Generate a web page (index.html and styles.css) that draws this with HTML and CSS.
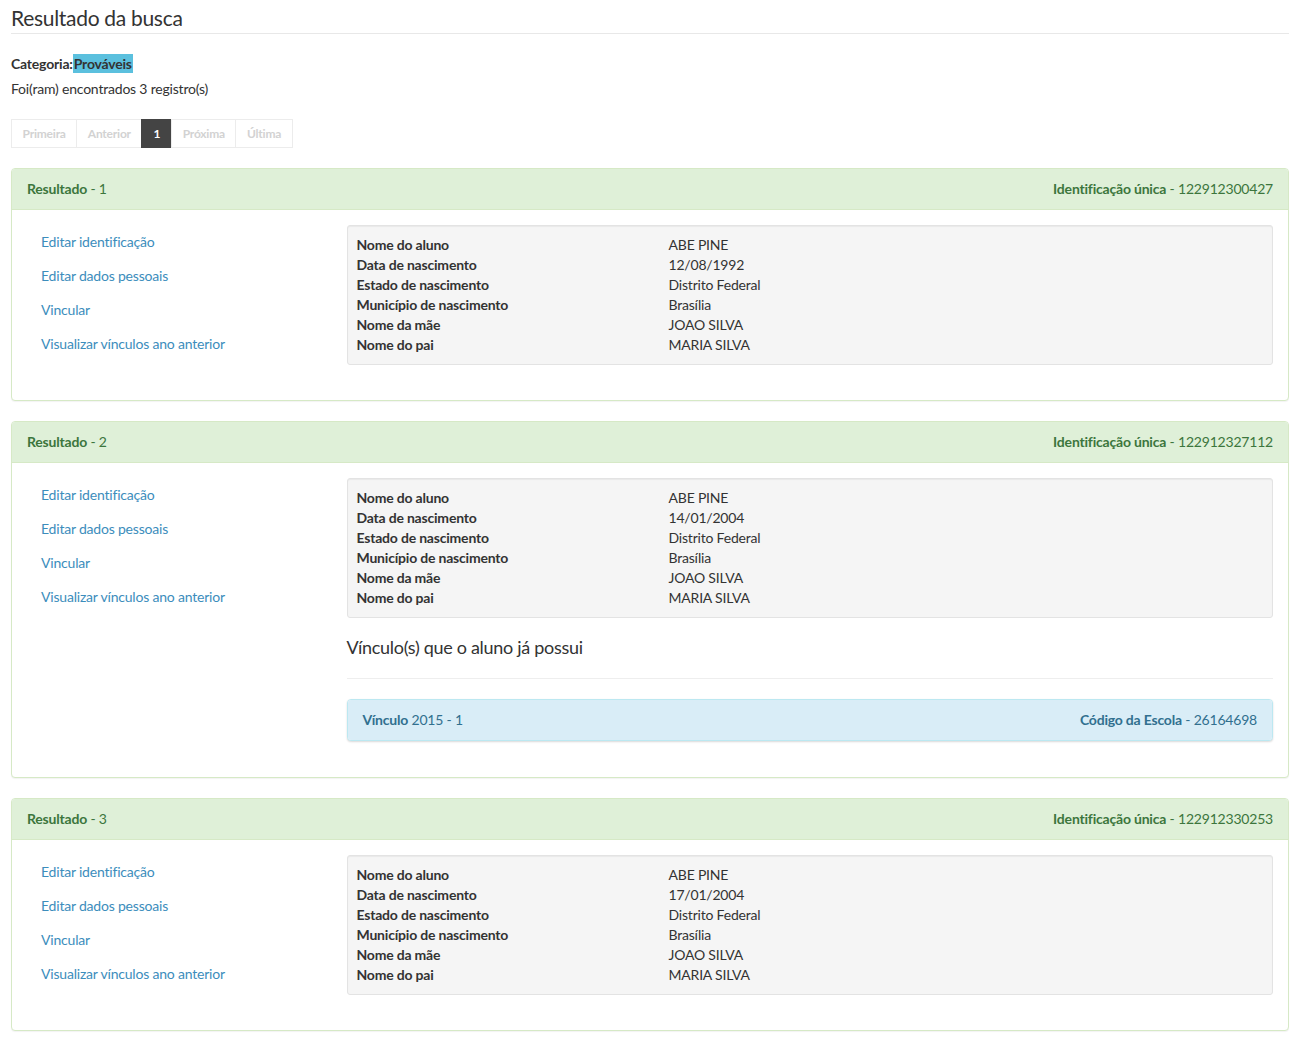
FILE: index.html
```html
<!DOCTYPE html>
<html lang="pt-BR">
<head>
<meta charset="utf-8">
<title>Resultado da busca</title>
<link rel="stylesheet" href="styles.css">
</head>
<body>
<div class="page">
  <h2 class="page-header">Resultado da busca</h2>
  <p class="category"><strong>Categoria:</strong><span class="label-info">Prováveis</span></p>
  <p class="count">Foi(ram) encontrados 3 registro(s)</p>
  <ul class="pagination">
    <li class="disabled"><span>Primeira</span></li>
    <li class="disabled"><span>Anterior</span></li>
    <li class="active"><span>1</span></li>
    <li class="disabled"><span>Próxima</span></li>
    <li class="disabled"><span>Última</span></li>
  </ul>

  <div class="panel panel-success">
    <div class="panel-heading"><span><b>Resultado</b> - 1</span><span><b>Identificação única</b> - 122912300427</span></div>
    <div class="panel-body">
      <ul class="actions">
        <li><a href="#">Editar identificação</a></li>
        <li><a href="#">Editar dados pessoais</a></li>
        <li><a href="#">Vincular</a></li>
        <li><a href="#">Visualizar vínculos ano anterior</a></li>
      </ul>
      <div class="main">
        <dl class="well">
          <dt>Nome do aluno</dt><dd>ABE PINE</dd>
          <dt>Data de nascimento</dt><dd>12/08/1992</dd>
          <dt>Estado de nascimento</dt><dd>Distrito Federal</dd>
          <dt>Município de nascimento</dt><dd>Brasília</dd>
          <dt>Nome da mãe</dt><dd>JOAO SILVA</dd>
          <dt>Nome do pai</dt><dd>MARIA SILVA</dd>
        </dl>
      </div>
    </div>
  </div>

  <div class="panel panel-success">
    <div class="panel-heading"><span><b>Resultado</b> - 2</span><span><b>Identificação única</b> - 122912327112</span></div>
    <div class="panel-body">
      <ul class="actions">
        <li><a href="#">Editar identificação</a></li>
        <li><a href="#">Editar dados pessoais</a></li>
        <li><a href="#">Vincular</a></li>
        <li><a href="#">Visualizar vínculos ano anterior</a></li>
      </ul>
      <div class="main">
        <dl class="well">
          <dt>Nome do aluno</dt><dd>ABE PINE</dd>
          <dt>Data de nascimento</dt><dd>14/01/2004</dd>
          <dt>Estado de nascimento</dt><dd>Distrito Federal</dd>
          <dt>Município de nascimento</dt><dd>Brasília</dd>
          <dt>Nome da mãe</dt><dd>JOAO SILVA</dd>
          <dt>Nome do pai</dt><dd>MARIA SILVA</dd>
        </dl>
        <h4 class="section-title">Vínculo(s) que o aluno já possui</h4>
        <div class="panel panel-info">
          <div class="panel-heading"><span><b>Vínculo</b> 2015 - 1</span><span><b>Código da Escola</b> - 26164698</span></div>
        </div>
      </div>
    </div>
  </div>

  <div class="panel panel-success">
    <div class="panel-heading"><span><b>Resultado</b> - 3</span><span><b>Identificação única</b> - 122912330253</span></div>
    <div class="panel-body">
      <ul class="actions">
        <li><a href="#">Editar identificação</a></li>
        <li><a href="#">Editar dados pessoais</a></li>
        <li><a href="#">Vincular</a></li>
        <li><a href="#">Visualizar vínculos ano anterior</a></li>
      </ul>
      <div class="main">
        <dl class="well">
          <dt>Nome do aluno</dt><dd>ABE PINE</dd>
          <dt>Data de nascimento</dt><dd>17/01/2004</dd>
          <dt>Estado de nascimento</dt><dd>Distrito Federal</dd>
          <dt>Município de nascimento</dt><dd>Brasília</dd>
          <dt>Nome da mãe</dt><dd>JOAO SILVA</dd>
          <dt>Nome do pai</dt><dd>MARIA SILVA</dd>
        </dl>
      </div>
    </div>
  </div>
</div>
</body>
</html>
```

FILE: styles.css
```css
* { box-sizing: border-box; }
html, body { margin: 0; padding: 0; background: #fff; }
body {
  font-family: Lato, "Open Sans", "Liberation Sans", sans-serif;
  font-size: 14px;
  line-height: 20px;
  letter-spacing: -0.2px;
  color: #333;
}
.page { padding: 6px 10px 0 11px; }
.page-header {
  margin: 0 0 20px;
  font-size: 21px;
  font-weight: 400;
  line-height: 24px;
  letter-spacing: -0.3px;
  color: #333;
  padding-bottom: 3px;
  border-bottom: 1px solid #e8e8e8;
}
.category { margin: 0 0 5px; }
.category strong { font-weight: 700; }
.label-info { background: #5bc0de; font-weight: 700; color: #333; padding: 0 1px; display: inline-block; line-height: 19px; }
.count { margin: 0 0 20px; }
.pagination { list-style: none; margin: 0 0 20px; padding: 0; display: flex; }
.pagination li span {
  display: block;
  font-size: 12px;
  font-weight: 700;
  line-height: 17px;
  padding: 5px 10.5px;
  border: 1px solid #ececec;
  margin-left: -1px;
  color: #d2d2d2;
  background: #fff;
}
.pagination li:first-child span { margin-left: 0; }
.pagination li.active span { background: #444; border-color: #444; color: #fff; padding: 5px 11px; }

.panel {
  border: 1px solid #d6e9c6;
  border-radius: 4px;
  margin-bottom: 20px;
  background: #fff;
  box-shadow: 0 1px 1px rgba(0,0,0,.05);
}
.panel-heading {
  display: flex;
  justify-content: space-between;
  padding: 10px 15px;
  border-bottom: 1px solid #d6e9c6;
  border-radius: 3px 3px 0 0;
  background: #dff0d8;
  color: #3c763d;
}
.panel-heading b { font-weight: 700; }
.panel-body { display: flex; padding: 15px 0; }
.actions { list-style: none; margin: 0; padding: 0 0 0 15px; width: 319.5px; flex: none; }
.actions li a { display: block; padding: 7px 14px; color: #3c8dbc; text-decoration: none; }
.main { flex: 1; padding: 0 15px 0 15px; min-width: 0; }
.well {
  margin: 0 0 20px;
  padding: 9px;
  background: #f5f5f5;
  border: 1px solid #e3e3e3;
  border-radius: 3px;
  box-shadow: inset 0 1px 1px rgba(0,0,0,.05);
  display: grid;
  grid-template-columns: 312px 1fr;
}
.well dt { font-weight: 700; margin: 0; }
.well dd { margin: 0; }
.section-title {
  margin: 0 0 20px;
  font-size: 18px;
  font-weight: 400;
  line-height: 18px;
  letter-spacing: -0.3px;
  padding-bottom: 22px;
  border-bottom: 1px solid #eee;
}
.panel-info { border-color: #bce8f1; box-shadow: 0 1px 2px rgba(0,0,0,.15); margin-bottom: 21px; }
.panel-info .panel-heading { background: #d9edf7; color: #31708f; border-bottom: 0; border-radius: 3px; }
```
